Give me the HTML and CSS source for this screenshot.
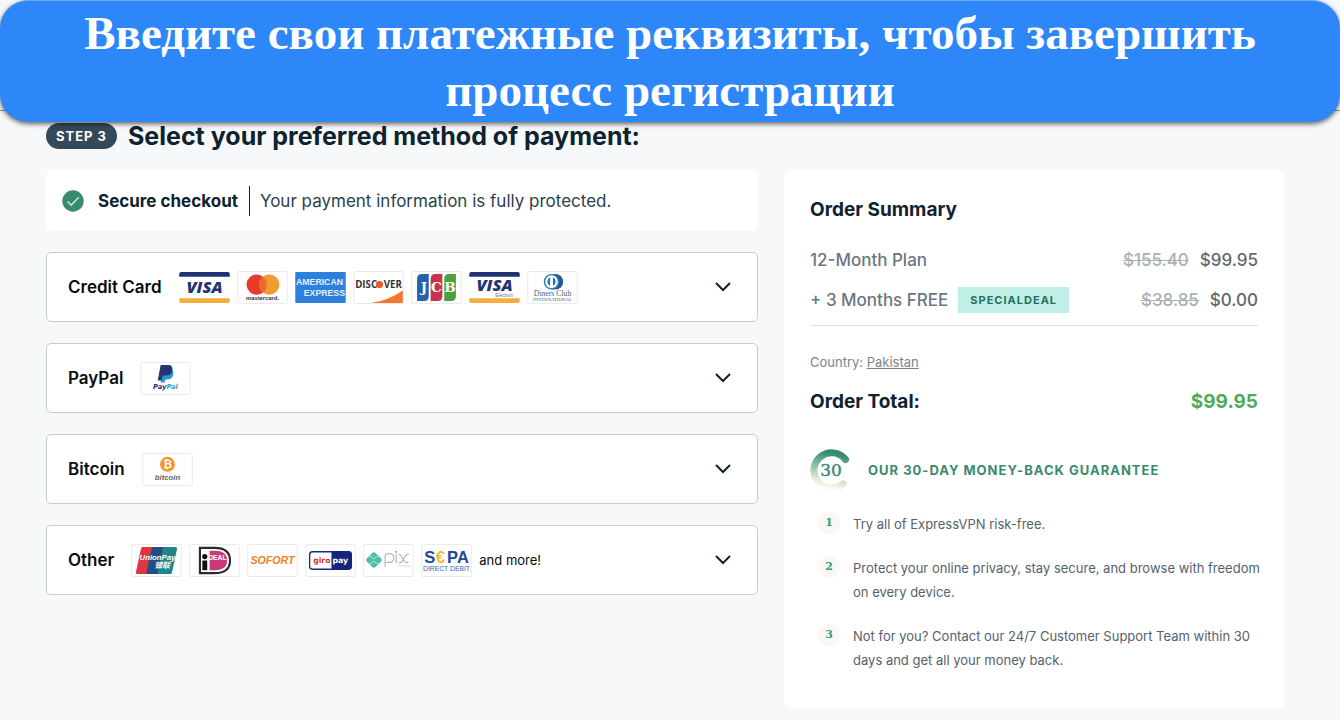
FILE: index.html
```html
<!DOCTYPE html>
<html lang="ru">
<head>
    <meta charset="UTF-8">
    <title>Checkout</title>
    <link rel="stylesheet" href="styles.css">
</head>
<body>
    <div class="banner">Введите свои платежные реквизиты, чтобы завершить процесс регистрации</div>

    <main class="page" lang="en">
        <div class="step">
            <span class="step-badge">STEP 3</span>
            <h1>Select your preferred method of payment:</h1>
        </div>

        <div class="columns">
            <section class="methods">
                <div class="secure">
                    <svg class="check" viewBox="0 0 22 22">
                        <circle cx="11" cy="11" r="10.7" fill="#3b8a6e"/>
                        <path d="M5.5 11.5l3.7 3.6 7.6-7.8" fill="none" stroke="#b5f0dc" stroke-width="1.5"/>
                    </svg>
                    <strong>Secure checkout</strong>
                    <span class="secure-text">Your payment information is fully protected.</span>
                </div>

                <button class="method">
                    <span class="method-name">Credit Card</span>
                    <span class="logos">
                        <svg class="logo" viewBox="0 0 52 34">
                            <rect width="52" height="34" rx="2" fill="#fff"/>
                            <path d="M0 6V3q0-2 2-2h48q2 0 2 2v3z" fill="#1f3170"/>
                            <path d="M0 28h52v3q0 2-2 2H2q-2 0-2-2z" fill="#f3ae3b"/>
                            <text x="26" y="23" class="visa">VISA</text>
                        </svg>
                        <svg class="logo" viewBox="0 0 52 34">
                            <rect x=".5" y=".5" width="51" height="33" rx="1" class="frame"/>
                            <circle cx="20" cy="14" r="10.5" fill="#e9392b"/>
                            <circle cx="33" cy="14" r="10.5" fill="#f29b35"/>
                            <path d="M26.500 5.800a10.500 10.500 0 0 1 0 16.400a10.500 10.500 0 0 1 0-16.400z" fill="#ee6a2b"/>
                            <text x="26" y="30" class="mastercard">mastercard.</text>
                        </svg>
                        <svg class="logo" viewBox="0 0 52 34">
                            <rect x="0" y="1" width="52" height="32" rx="1" fill="#2e80dd"/>
                            <text x="25" y="14" class="amex">AMERICAN</text>
                            <text x="30" y="26" class="amex">EXPRESS</text>
                        </svg>
                        <svg class="logo" viewBox="0 0 52 34">
                            <rect x=".5" y=".5" width="51" height="33" rx="1" class="frame"/>
                            <path d="M18 33Q37 30 51 20v13z" fill="#f4772e"/>
                            <circle cx="27" cy="14" r="3.7" fill="#ef5a22"/>
                            <text x="2" y="17.500" class="discover">DISC</text>
                            <text x="50" y="17.500" class="discover discover-end">VER</text>
                        </svg>
                        <svg class="logo" viewBox="0 0 52 34">
                            <rect x=".5" y=".5" width="51" height="33" rx="1" class="frame"/>
                            <path d="M6 31V8q0-5 5-5h7v23q0 5-5 5z" fill="#2462ae"/>
                            <path d="M20 31V8q0-5 5-5h7v23q0 5-5 5z" fill="#c8324a"/>
                            <path d="M34 31V8q0-5 5-5h7v23q0 5-5 5z" fill="#49a23b"/>
                            <text x="13 26 40" y="22" class="jcb">JCB</text>
                        </svg>
                        <svg class="logo" viewBox="0 0 52 34">
                            <rect width="52" height="34" rx="2" fill="#fff"/>
                            <path d="M0 6V3q0-2 2-2h48q2 0 2 2v3z" fill="#1f3170"/>
                            <path d="M0 28h52v3q0 2-2 2H2q-2 0-2-2z" fill="#f3ae3b"/>
                            <text x="26" y="21" class="visa">VISA</text>
                            <text x="45" y="26.500" class="electron">Electron</text>
                        </svg>
                        <svg class="logo" viewBox="0 0 52 34">
                            <rect x=".5" y=".5" width="51" height="33" rx="1" class="frame"/>
                            <path d="M26 3h3a8 8 0 0 1 0 16h-3z" fill="#1f5b8e"/>
                            <circle cx="25" cy="11" r="8" fill="#2e7eb5"/>
                            <circle cx="25" cy="11" r="6.500" fill="#fff"/>
                            <path d="M23.500 6.500a5 5 0 0 0 0 9zM26.500 6.500a5 5 0 0 1 0 9z" fill="#2874a9"/>
                            <text x="26" y="26" class="diners">Diners Club</text>
                            <text x="26" y="31" class="diners diners-small">INTERNATIONAL</text>
                        </svg>
                    </span>
                    <svg class="chevron" viewBox="0 0 16 10"><path d="M1 1l7 7 7-7"/></svg>
                </button>

                <button class="method">
                    <span class="method-name">PayPal</span>
                    <span class="logos">
                        <svg class="logo" viewBox="0 0 52 34">
                            <rect x=".5" y=".5" width="51" height="33" rx="1" class="frame"/>
                            <path d="M24 7h7q4 1 3 6-1 5-6 5h-2l-1 3h-4z" fill="#2b98d5"/>
                            <path d="M21 3h8q5 0 4 6-1 5-7 5h-3l-1 5h-4z" fill="#24356f"/>
                            <text x="26" y="27.500" class="paypal">Pay<tspan fill="#3a9cd6">Pal</tspan></text>
                        </svg>
                    </span>
                    <svg class="chevron" viewBox="0 0 16 10"><path d="M1 1l7 7 7-7"/></svg>
                </button>

                <button class="method">
                    <span class="method-name">Bitcoin</span>
                    <span class="logos">
                        <svg class="logo" viewBox="0 0 52 34">
                            <rect x=".5" y=".5" width="51" height="33" rx="1" class="frame"/>
                            <circle cx="26" cy="11.500" r="7.700" fill="#ee9838"/>
                            <text x="26" y="15.500" class="coin">₿</text>
                            <text x="26" y="28" class="bitcoin">bitcoin</text>
                        </svg>
                    </span>
                    <svg class="chevron" viewBox="0 0 16 10"><path d="M1 1l7 7 7-7"/></svg>
                </button>

                <button class="method">
                    <span class="method-name">Other</span>
                    <span class="logos">
                        <svg class="logo" viewBox="0 0 52 34">
                            <rect x=".5" y=".5" width="51" height="33" rx="1" class="frame"/>
                            <path d="M12 3h12l-6 28H7q-3 0-2-3l5-23q0-2 2-2z" fill="#dc3640"/>
                            <path d="M22 3h13l-6 28H18q-3 0-2-3l5-23z" fill="#204f88"/>
                            <path d="M33 3h12q3 0 2 3l-5 23q0 2-3 2H27z" fill="#20868a"/>
                            <text x="27" y="16" class="union">UnionPay</text>
                            <text x="32" y="25" class="union union-cn">银联</text>
                        </svg>
                        <svg class="logo" viewBox="0 0 52 34">
                            <rect x=".5" y=".5" width="51" height="33" rx="1" class="frame"/>
                            <path d="M11 4h15q16 0 16 13T26 30H11z" fill="#fff" stroke="#2b2b2d" stroke-width="2.200"/>
                            <path d="M21 7h5q13 0 13 10T26 27h-5z" fill="#cb397d"/>
                            <circle cx="16" cy="13" r="2.700" fill="#111"/>
                            <path d="M13.500 17h5v10h-5z" fill="#111"/>
                            <text x="29" y="16.500" class="ideal">DEAL</text>
                        </svg>
                        <svg class="logo" viewBox="0 0 52 34">
                            <rect x=".5" y=".5" width="51" height="33" rx="1" class="frame"/>
                            <text x="26" y="21" class="sofort">SOFORT</text>
                        </svg>
                        <svg class="logo" viewBox="0 0 52 34">
                            <rect x=".5" y=".5" width="51" height="33" rx="1" class="frame"/>
                            <rect x="4.500" y="8" width="43" height="18" rx="3" fill="#fff" stroke="#1c2b78" stroke-width="1.400"/>
                            <path d="M27 7.500h17q4 0 4 4v11q0 4-4 4H27z" fill="#14257a"/>
                            <text x="26" y="20" class="giro giro-red">giro</text>
                            <text x="28" y="20" class="giro">pay</text>
                        </svg>
                        <svg class="logo" viewBox="0 0 52 34">
                            <rect x=".5" y=".5" width="51" height="33" rx="1" class="frame"/>
                            <path d="M9 9.500q2-2 4 0l5 5q2 2 0 4l-5 5q-2 2-4 0l-5-5q-2-2 0-4z" fill="#50bcab"/>
                            <path d="M6 12.500q3 0 5 3 2-3 5-3M6 20.500q3 0 5-3 2 3 5 3" fill="none" stroke="#b7e7de"/>
                            <path d="M22.500 23.500V13q0-3 4-3 5 0 5 4.500t-5 4.500h-4M34 10v9.500M36.500 10.500q2 0 4 4.500 2 4.500 6 4.500M47 10.500q-3 0-5 4.500-2 4.500-5.500 4.500" fill="none" stroke="#b4b7b8" stroke-width="1.200"/>
                            <circle cx="34" cy="8" r="1" fill="#50bcab"/>
                            <path d="M36 22.500h13" stroke="#d8dadb"/>
                        </svg>
                        <svg class="logo" viewBox="0 0 52 34">
                            <rect x=".5" y=".5" width="51" height="33" rx="1" class="frame"/>
                            <text x="3" y="20" class="sepa">S</text>
                            <text x="15" y="20" class="sepa sepa-euro">€</text>
                            <text x="49" y="20" class="sepa sepa-end">PA</text>
                            <text x="26" y="27.500" class="debit">DIRECT DEBIT</text>
                        </svg>
                        <span class="more">and more!</span>
                    </span>
                    <svg class="chevron" viewBox="0 0 16 10"><path d="M1 1l7 7 7-7"/></svg>
                </button>
            </section>

            <aside class="summary">
                <h2>Order Summary</h2>
                <table class="items">
                    <tr>
                        <td>12-Month Plan</td>
                        <td class="price"><s>$155.40</s>$99.95</td>
                    </tr>
                    <tr>
                        <td><div class="bonus">+ 3 Months FREE <span class="deal">SPECIALDEAL</span></div></td>
                        <td class="price"><s>$38.85</s>$0.00</td>
                    </tr>
                </table>
                <p class="country">Country: <a href="#">Pakistan</a></p>
                <div class="total">
                    <span>Order Total:</span>
                    <span class="total-price">$99.95</span>
                </div>

                <div class="guarantee">
                    <svg class="thirty" viewBox="0 0 42 44">
                        <defs>
                            <linearGradient id="ring" x1=".6" y1="0" x2=".4" y2="1">
                                <stop offset="0" stop-color="#348a6c"/>
                                <stop offset=".5" stop-color="#94c8b2"/>
                                <stop offset=".8" stop-color="#e7e8d3"/>
                                <stop offset="1" stop-color="#fdfcf6"/>
                            </linearGradient>
                        </defs>
                        <path d="M35.500 11.500A17.700 17.700 0 1 0 33 36" fill="none" stroke="url(#ring)" stroke-width="7" stroke-linecap="round"/>
                        <text x="21" y="28" class="thirty-text">30</text>
                    </svg>
                    <h3>OUR 30-DAY MONEY-BACK GUARANTEE</h3>
                </div>
                <ol class="promises">
                    <li><span class="num">1</span>Try all of ExpressVPN risk-free.</li>
                    <li><span class="num">2</span>Protect your online privacy, stay secure, and browse with freedom on every device.</li>
                    <li><span class="num">3</span>Not for you? Contact our 24/7 Customer Support Team within 30 days and get all your money back.</li>
                </ol>
            </aside>
        </div>
    </main>
</body>
</html>
```
FILE: styles.css
```css
* {
    box-sizing: border-box;
}

body {
    margin: 0;
    background-color: #f6f8f9;
    font-family: Inter, "Liberation Sans", sans-serif;
    color: #0f2230;
}

h1, h2, h3, p, ol {
    margin: 0;
}

.banner {
    position: relative;
    z-index: 1;
    padding: 4px 60px 3px;
    border-top: 1px solid #6aaaf5;
    border-radius: 28px;
    background-color: #2e87f8;
    box-shadow: 0 2px 5px rgba(0, 0, 0, 0.6);
    color: #fff;
    font-family: "Liberation Serif", serif;
    font-size: 47px;
    font-weight: bold;
    line-height: 57px;
    text-align: center;
}

.page {
    margin-top: -12px;
    padding: 9px 56px 12px 46px;
    border-top: 1px solid #9a9a9a;
}

.step {
    display: flex;
    align-items: center;
    gap: 11px;
    height: 32px;
    margin-bottom: 18px;
}

.step-badge {
    padding: 0 10px;
    border-radius: 13px;
    background-color: #344a5a;
    color: #fff;
    font-size: 13px;
    font-weight: 700;
    letter-spacing: 1px;
    line-height: 26px;
}

h1 {
    font-size: 25px;
    font-weight: 700;
    line-height: 32px;
}

.columns {
    display: grid;
    grid-template-columns: 712fr 500fr;
    gap: 26px;
    align-items: start;
}

.methods {
    display: flex;
    flex-direction: column;
    gap: 21px;
}

.secure {
    display: flex;
    align-items: center;
    height: 61px;
    padding: 0 16px;
    border-radius: 6px;
    background-color: #fff;
    font-size: 17px;
}

.secure strong {
    font-weight: 700;
}

.check {
    width: 22px;
    height: 22px;
    margin-right: 14px;
}

.secure-text {
    margin-left: 11px;
    padding-left: 10px;
    border-left: 1px solid #0f2230;
    color: #2b3f4e;
    line-height: 30px;
}

.method {
    display: flex;
    align-items: center;
    gap: 17px;
    height: 70px;
    padding: 0 26px 0 21px;
    border: 1px solid #c6cdd1;
    border-radius: 5px;
    background-color: #fff;
    color: #0b0b0c;
    font-family: inherit;
    cursor: pointer;
}

.method-name {
    font-size: 17px;
    font-weight: 600;
}

.logos {
    display: flex;
    align-items: center;
    gap: 7px;
}

.logo {
    width: 51px;
    height: 33px;
}

.more {
    font-size: 13px;
}

.chevron {
    width: 16px;
    height: 10px;
    margin-left: auto;
    fill: none;
    stroke: #0f2230;
    stroke-width: 2;
}

/* logo lettering */
.logo text {
    text-anchor: middle;
    font-family: "Liberation Sans", sans-serif;
    font-weight: bold;
}

.frame {
    fill: #fff;
    stroke: #e9eaeb;
}

.logo .visa {
    fill: #1f3474;
    font-family: "Open Sans", sans-serif;
    font-size: 17px;
    font-style: italic;
    font-weight: 800;
}

.logo .electron {
    fill: #6a7090;
    font-size: 5px;
    font-weight: normal;
    text-anchor: end;
}

.logo .mastercard {
    fill: #333;
    font-size: 6px;
}

.logo .amex {
    fill: #e3f0fc;
    font-size: 9px;
}

.logo .discover {
    fill: #333;
    font-family: "Open Sans", sans-serif;
    font-size: 10px;
    text-anchor: start;
}

.logo .discover-end {
    text-anchor: end;
}

.logo .jcb {
    fill: #fff;
    font-family: "DejaVu Serif", serif;
    font-size: 14px;
}

.logo .diners {
    fill: #4d6275;
    font-family: "Liberation Serif", serif;
    font-size: 8px;
    font-weight: normal;
}

.logo .diners-small {
    font-size: 5px;
}

.logo .paypal {
    fill: #24356f;
    font-family: "DejaVu Sans", sans-serif;
    font-size: 7px;
    font-style: italic;
}

.logo .coin {
    fill: #fff;
    font-family: "DejaVu Sans", sans-serif;
    font-size: 11px;
}

.logo .bitcoin {
    fill: #666;
    font-size: 8px;
    font-style: italic;
}

.logo .union {
    fill: #fff;
    font-size: 8px;
    font-style: italic;
}

.logo .union-cn {
    font-family: "Noto Sans CJK SC", sans-serif;
}

.logo .ideal {
    fill: #fff;
    font-size: 7px;
}

.logo .sofort {
    fill: #ed8226;
    font-size: 11px;
    font-style: italic;
}

.logo .giro {
    fill: #fff;
    font-family: "DejaVu Sans", sans-serif;
    font-size: 8px;
    text-anchor: start;
}

.logo .giro-red {
    fill: #e33231;
    text-anchor: end;
}

.logo .sepa {
    fill: #22489c;
    font-size: 17px;
    text-anchor: start;
}

.logo .sepa-euro {
    fill: #eebb3c;
}

.logo .sepa-end {
    text-anchor: end;
}

.logo .debit {
    fill: #3d65b0;
    font-size: 7px;
    font-weight: normal;
}

.summary {
    padding: 26px 26px 36px;
    border-radius: 6px;
    background-color: #fff;
}

h2 {
    font-size: 19px;
    font-weight: 700;
    line-height: 28px;
}

.items {
    width: 100%;
    margin-top: 16px;
    padding-bottom: 5px;
    border-bottom: 1px solid #dde0e2;
    border-spacing: 0;
    color: #6b7780;
    font-size: 17px;
    font-weight: 500;
    line-height: 26px;
}

.items td {
    height: 40px;
    padding: 0;
}

.bonus {
    display: flex;
    align-items: center;
    gap: 10px;
}

.deal {
    padding: 0 12px;
    background-color: #c1eee6;
    color: #24705c;
    font-size: 11px;
    font-weight: 700;
    letter-spacing: 1px;
}

.items .price {
    color: #5d6971;
    text-align: right;
}

.price s {
    margin-right: 11px;
    color: #a9b0b6;
}

.country {
    margin-top: 26px;
    color: #7c8489;
    font-size: 13px;
    line-height: 20px;
}

.country a {
    color: inherit;
}

.total {
    display: flex;
    justify-content: space-between;
    margin-top: 16px;
    font-size: 19px;
    font-weight: 700;
    line-height: 28px;
}

.total-price {
    color: #4fab5c;
}

.guarantee {
    display: flex;
    align-items: center;
    gap: 16px;
    margin-top: 32px;
}

.thirty {
    width: 42px;
    height: 44px;
}

.thirty-text {
    fill: #3b8a6e;
    stroke: #3b8a6e;
    stroke-width: 0.4;
    font-family: "DejaVu Serif", serif;
    font-size: 17px;
    text-anchor: middle;
}

h3 {
    color: #3b8a6e;
    font-size: 13px;
    font-weight: 700;
    letter-spacing: 1px;
}

.promises {
    display: flex;
    flex-direction: column;
    gap: 20px;
    margin-top: 20px;
    margin-right: -8px;
    padding: 0 0 0 8px;
    color: #55626d;
    font-size: 13px;
    line-height: 24px;
    list-style: none;
}

.promises li {
    display: grid;
    grid-template-columns: 22px 1fr;
    gap: 13px;
}

.num {
    height: 22px;
    border-radius: 50%;
    background-color: #f8f9f5;
    color: #3b9a76;
    font-family: "DejaVu Serif", serif;
    font-size: 11px;
    font-weight: bold;
    line-height: 22px;
    text-align: center;
}
```
